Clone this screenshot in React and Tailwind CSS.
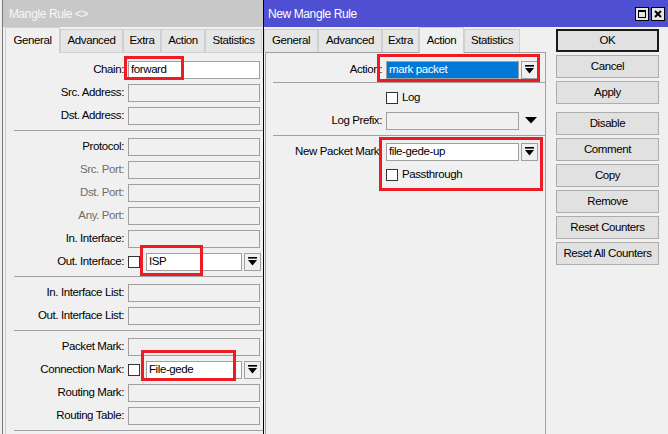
import React from "react";

const DropIcon = () => (
  <svg width="9" height="9" viewBox="0 0 9 9">
    <rect x="0" y="0" width="9" height="1.6" fill="#000" />
    <polygon points="0,3 9,3 4.5,8.5" fill="#000" />
  </svg>
);

const DropBtn = () => (
  <div className="flex h-[18px] w-[17px] shrink-0 items-center justify-center border border-[#a0a0a0] bg-[#f0f0f0]">
    <DropIcon />
  </div>
);

const Check = () => <div className="h-[12px] w-[12px] shrink-0 border border-[#333] bg-white" />;

const Field = ({ white, blue, w, children }) => (
  <div
    className={`flex h-[18px] shrink-0 items-center border border-[#a0a0a0] pl-[2px] ${
      blue ? "bg-[#0078d7] text-white" : white ? "bg-white" : "bg-[#f0f0f0]"
    } ${w}`}
  >
    {children}
  </div>
);

const LeftRow = ({ label, dim, children }) => (
  <div className="flex h-[23px] items-center">
    <div className={`w-[118px] shrink-0 text-right ${dim ? "text-[#6d6d6d]" : "text-black"}`}>{label}</div>
    <div className="ml-[4px] flex items-center">{children || <Field w="w-[132px]" />}</div>
  </div>
);

const LeftSep = () => <div className="mb-[4px] ml-[8px] mt-[3px] border-t border-[#a0a0a0]" />;

const RightRow = ({ label, children }) => (
  <div className="flex h-[23px] items-center">
    <div className="w-[116px] shrink-0 text-right text-black">{label}</div>
    <div className="ml-[4px] flex items-center">{children}</div>
  </div>
);

const Tab = ({ label, active, w }) => (
  <div
    className={`flex items-center justify-center border-l border-r border-t border-[#d0d0d0] ${w} ${
      active ? "relative z-10 -mb-px h-[26px] bg-[#f0f0f0]" : "h-[23px] bg-[#e6e6e6]"
    }`}
  >
    {label}
  </div>
);

const Button = ({ label, def, className = "" }) => (
  <div
    className={`flex h-[23px] w-[103px] items-center justify-center bg-[#e1e1e1] text-black ${
      def ? "border-2 border-[#1a1a1a]" : "border border-[#adadad]"
    } ${className}`}
  >
    {label}
  </div>
);

const Red = ({ className }) => <div className={`pointer-events-none absolute border-[3px] border-[#ed1c24] ${className}`} />;

export default function App() {
  return (
    <div className="relative flex h-[434px] w-[668px] overflow-hidden bg-[#f0f0f0] font-['Liberation_Sans',Arial,sans-serif] text-[11.5px] tracking-[-0.4px] text-black">
      {/* left window */}
      <div className="ml-[2px] flex w-[261px] shrink-0 flex-col border-l border-[#7a7a7a]">
        <div className="flex h-[27px] shrink-0 items-center bg-[#c8c8c8] pl-[6px] text-[12px] text-[#f7f7f7]">Mangle Rule &lt;&gt;</div>
        <div className="flex h-[25px] shrink-0 items-end pl-[2px]">
          <Tab label="General" active w="w-[55px]" />
          <Tab label="Advanced" w="w-[63px]" />
          <Tab label="Extra" w="w-[38px]" />
          <Tab label="Action" w="w-[44px]" />
          <Tab label="Statistics" w="w-[57px]" />
        </div>
        <div className="ml-[2px] flex flex-1 flex-col border-l border-t border-[#d0d0d0] pt-[5px]">
          <LeftRow label="Chain:">
            <Field white w="w-[132px]">forward</Field>
          </LeftRow>
          <LeftRow label="Src. Address:" />
          <LeftRow label="Dst. Address:" />
          <LeftSep />
          <LeftRow label="Protocol:" />
          <LeftRow label="Src. Port:" dim />
          <LeftRow label="Dst. Port:" dim />
          <LeftRow label="Any. Port:" dim />
          <LeftRow label="In. Interface:" />
          <LeftRow label="Out. Interface:">
            <Check />
            <div className="ml-[6px]">
              <Field white w="w-[96px]">ISP</Field>
            </div>
            <div className="ml-[2px]">
              <DropBtn />
            </div>
          </LeftRow>
          <LeftSep />
          <LeftRow label="In. Interface List:" />
          <LeftRow label="Out. Interface List:" />
          <LeftSep />
          <LeftRow label="Packet Mark:" />
          <LeftRow label="Connection Mark:">
            <Check />
            <div className="ml-[6px]">
              <Field white w="w-[96px]">File-gede</Field>
            </div>
            <div className="ml-[2px]">
              <DropBtn />
            </div>
          </LeftRow>
          <LeftRow label="Routing Mark:" />
          <LeftRow label="Routing Table:" />
          <LeftSep />
        </div>
      </div>

      {/* right window */}
      <div className="flex flex-1 flex-col border-l border-black">
        <div className="flex h-[27px] shrink-0 items-center justify-between bg-[#4f4fd1] pl-[4px] pr-[3px] text-[12px] text-white">
          <span>New Mangle Rule</span>
          <div className="flex gap-[2px]">
            <div className="flex h-[14px] w-[14px] items-center justify-center border border-black bg-[#e6e6e6]">
              <div className="h-[8px] w-[8px] border border-black border-t-2" />
            </div>
            <div className="flex h-[14px] w-[14px] items-center justify-center border border-black bg-[#e6e6e6]">
              <svg width="8" height="8" viewBox="0 0 8 8">
                <path d="M1 1 L7 7 M7 1 L1 7" stroke="#000" strokeWidth="2" />
              </svg>
            </div>
          </div>
        </div>
        <div className="flex flex-1">
          <div className="flex w-[282px] shrink-0 flex-col">
            <div className="flex h-[25px] shrink-0 items-end">
              <Tab label="General" w="w-[54px]" />
              <Tab label="Advanced" w="w-[64px]" />
              <Tab label="Extra" w="w-[37px]" />
              <Tab label="Action" active w="w-[45px]" />
              <Tab label="Statistics" w="w-[56px]" />
            </div>
            <div className="ml-[1px] flex flex-1 flex-col border-l border-r border-t border-[#a0a0a0] pt-[5px]">
              <RightRow label="Action:">
                <Field blue w="w-[133px]">mark packet</Field>
                <div className="ml-[2px]">
                  <DropBtn />
                </div>
              </RightRow>
              <div className="mb-[3px] ml-[7px] mt-[1px] border-t border-[#a0a0a0]" />
              <div className="flex h-[23px] items-center pl-[120px]">
                <Check />
                <span className="ml-[4px]">Log</span>
              </div>
              <RightRow label="Log Prefix:">
                <Field w="w-[133px]" />
                <svg className="ml-[6px]" width="12" height="7" viewBox="0 0 12 7">
                  <polygon points="0,0 12,0 6,6.5" fill="#000" />
                </svg>
              </RightRow>
              <div className="mb-[4px] ml-[7px] mt-[3px] border-t border-[#a0a0a0]" />
              <RightRow label="New Packet Mark:">
                <Field white w="w-[133px]">file-gede-up</Field>
                <div className="ml-[2px]">
                  <DropBtn />
                </div>
              </RightRow>
              <div className="flex h-[23px] items-center pl-[120px]">
                <Check />
                <span className="ml-[4px]">Passthrough</span>
              </div>
            </div>
          </div>
          <div className="flex flex-col gap-[3px] pl-[10px] pt-[2px]">
            <Button label="OK" def />
            <Button label="Cancel" />
            <Button label="Apply" />
            <Button label="Disable" className="mt-[5px]" />
            <Button label="Comment" />
            <Button label="Copy" />
            <Button label="Remove" />
            <Button label="Reset Counters" />
            <Button label="Reset All Counters" />
          </div>
        </div>
      </div>

      {/* annotations */}
      <Red className="left-[124px] top-[56px] h-[24px] w-[60px]" />
      <Red className="left-[140px] top-[245px] h-[31px] w-[63px]" />
      <Red className="left-[141px] top-[350px] h-[31px] w-[95px]" />
      <Red className="left-[377px] top-[54px] h-[28px] w-[163px]" />
      <Red className="left-[379px] top-[137px] h-[54px] w-[164px]" />
    </div>
  );
}
